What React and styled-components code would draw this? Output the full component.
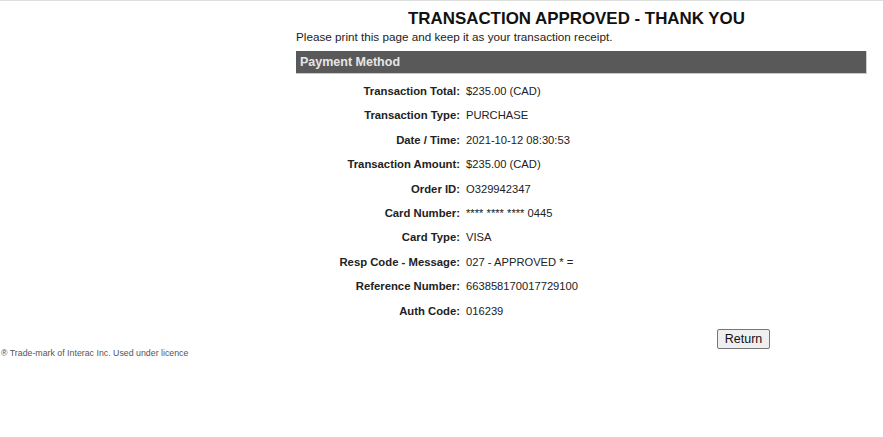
import React from 'react'
import styled, { createGlobalStyle } from 'styled-components'

const GlobalStyle = createGlobalStyle`
  body {
    margin: 0;
    background: #ffffff;
    font-family: "Liberation Sans", Arial, sans-serif;
    color: #222;
  }
`

const rows = [
  ['Transaction Total:', '$235.00 (CAD)'],
  ['Transaction Type:', 'PURCHASE'],
  ['Date / Time:', '2021-10-12 08:30:53'],
  ['Transaction Amount:', '$235.00 (CAD)'],
  ['Order ID:', 'O329942347'],
  ['Card Number:', '**** **** **** 0445'],
  ['Card Type:', 'VISA'],
  ['Resp Code - Message:', '027 - APPROVED * ='],
  ['Reference Number:', '663858170017729100'],
  ['Auth Code:', '016239'],
]

const App = () => {
  return (
    <>
      <GlobalStyle />
      <Page>
        <Receipt>
          <Title>TRANSACTION APPROVED - THANK YOU</Title>
          <Note>Please print this page and keep it as your transaction receipt.</Note>
          <SectionBar>Payment Method</SectionBar>
          <Details>
            {rows.map(([label, value]) => (
              <React.Fragment key={label}>
                <Label>{label}</Label>
                <Value>{value}</Value>
              </React.Fragment>
            ))}
          </Details>
          <Actions>
            <ReturnButton>Return</ReturnButton>
          </Actions>
        </Receipt>
        <Footnote>® Trade-mark of Interac Inc. Used under licence</Footnote>
      </Page>
    </>
  )
}

export default App

const Page = styled.div`
  border-top: 1px solid #dcdfdb;
  min-height: 436px;
`
const Receipt = styled.div`
  width: 571px;
  margin-left: 296px;
  display: flex;
  flex-direction: column;
`
const Title = styled.h1`
  margin: 9px 0 0;
  font-size: 16.9px;
  font-weight: bold;
  text-align: center;
  color: #111;
  line-height: 18px;
  padding-right: 10px;
`
const Note = styled.p`
  margin: 2px 0 0;
  font-size: 11.7px;
  line-height: 14px;
  color: #222;
`
const SectionBar = styled.div`
  margin-top: 7px;
  height: 22px;
  background: #595959;
  border-bottom: 1px solid #c8c8c8;
  border-right: 1px solid #d0d0d0;
  color: #e6e6e6;
  font-weight: bold;
  font-size: 12.5px;
  line-height: 22px;
  padding-left: 4px;
`
const Details = styled.div`
  display: grid;
  grid-template-columns: 164px 1fr;
  column-gap: 6px;
  grid-auto-rows: 24.4px;
  margin-top: 5px;
`
const Label = styled.div`
  text-align: right;
  font-weight: bold;
  font-size: 11.3px;
  line-height: 24.4px;
  color: #222;
`
const Value = styled.div`
  font-size: 11.2px;
  line-height: 24.4px;
  color: #222;
`
const Actions = styled.div`
  display: flex;
  justify-content: flex-end;
  padding-right: 97px;
  margin-top: 6px;
`
const ReturnButton = styled.button`
  font-family: "Liberation Sans", Arial, sans-serif;
  font-size: 12.5px;
  color: #111;
  background: #efefef;
  border: 1px solid #767676;
  border-radius: 2px;
  height: 20px;
  width: 53px;
  padding: 0;
`
const Footnote = styled.div`
  margin-top: -1px;
  padding-left: 1px;
  font-size: 8.8px;
  color: #555;
`
